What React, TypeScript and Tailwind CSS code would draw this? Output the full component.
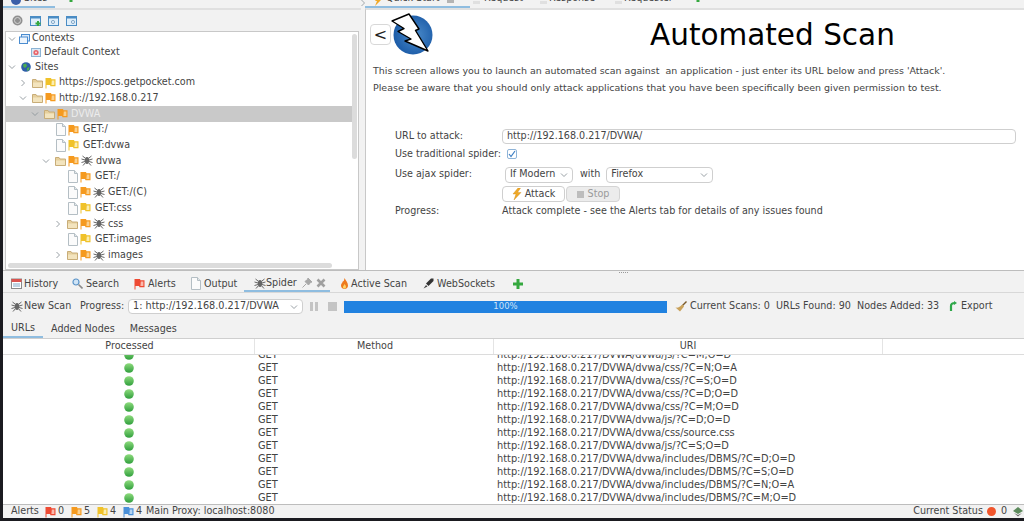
import React from "react";

type FlagColor = "red" | "orange" | "yellow" | "blue";
const flagColors: Record<FlagColor, [string, string]> = {
  red: ["#ee4a33", "#fbb9ad"],
  orange: ["#f59a1f", "#fbd08c"],
  yellow: ["#f0c22a", "#fbeeb0"],
  blue: ["#4a90d9", "#b5d4f2"],
};

function Flag({ c = "orange" }: { c?: FlagColor }) {
  const [a, b] = flagColors[c];
  return (
    <svg width="11" height="12" viewBox="0 0 11 12" className="shrink-0">
      <path d="M0.5 1h5.5l0.5 1.2h4v7H5.5L5 8H1.5v3.5h-1z" fill={a} />
      <path d="M6.8 3.4h2.6v4.6H6.4z" fill={b} />
      <path d="M2 2.2h2.6v4.6H2z" fill={a} />
    </svg>
  );
}

function Spider({ c = "#666" }: { c?: string }) {
  return (
    <svg width="12" height="11" viewBox="0 0 12 11" className="shrink-0" stroke={c} strokeWidth="1" fill="none">
      <ellipse cx="6" cy="5.5" rx="2.2" ry="3.4" fill={c} stroke="none" />
      <path d="M4 3 L1.5 1 M4 5 L0.5 4 M4 6.5 L0.5 7.5 M4.2 8 L2 10.5 M8 3 L10.5 1 M8 5 L11.5 4 M8 6.5 L11.5 7.5 M7.8 8 L10 10.5" />
    </svg>
  );
}

function FileIcon() {
  return (
    <svg width="10" height="13" viewBox="0 0 10 13" className="shrink-0">
      <path d="M0.5 0.5h6l3 3v9h-9z" fill="#fbfbfb" stroke="#b4bec4" />
      <path d="M6.5 0.5v3h3" fill="#e2e8ea" stroke="#b4bec4" />
    </svg>
  );
}

function Folder() {
  return (
    <svg width="11" height="10" viewBox="0 0 11 10" className="shrink-0">
      <path d="M0.5 1.5h3.5l1 1.5h5.5v6.5h-10z" fill="#e6cf9c" stroke="#c8ad78" />
      <path d="M1 4.5h9v4.5H1z" fill="#f3e4be" />
    </svg>
  );
}

function Chevron({ open }: { open?: boolean }) {
  return (
    <svg width="8" height="8" viewBox="0 0 8 8" className="shrink-0" fill="none" stroke="#8d959b" strokeWidth="0.9">
      {open ? <path d="M1 2.5 L4 5.5 L7 2.5" /> : <path d="M2.5 1 L5.5 4 L2.5 7" />}
    </svg>
  );
}

function TreeRow({ pad, children, selected, h = "h-[15.7px]" }: { pad: string; children: React.ReactNode; selected?: boolean; h?: string }) {
  return (
    <div className={`flex ${h} items-center gap-[2px] ${pad} ${selected ? "mr-[6px] bg-[#c9c9c9] text-[#ececec]" : ""}`}>
      {children}
    </div>
  );
}

function SmallWin({ children }: { children?: React.ReactNode }) {
  return (
    <svg width="11" height="10" viewBox="0 0 11 10">
      <rect x="0.5" y="0.5" width="10" height="9" fill="#dfeefa" stroke="#4a8cc4" />
      <rect x="0.5" y="0.5" width="10" height="2" fill="#4a8cc4" />
      {children}
    </svg>
  );
}

const rows = [
  "js/?C=M;O=D",
  "css/?C=N;O=A",
  "css/?C=S;O=D",
  "css/?C=D;O=D",
  "css/?C=M;O=D",
  "js/?C=D;O=D",
  "css/source.css",
  "js/?C=S;O=D",
  "includes/DBMS/?C=D;O=D",
  "includes/DBMS/?C=S;O=D",
  "includes/DBMS/?C=N;O=A",
  "includes/DBMS/?C=M;O=D",
];

function Dot() {
  return (
    <svg width="10" height="10" viewBox="0 0 10 10">
      <defs>
        <linearGradient id="g" x1="0" y1="0" x2="0" y2="1">
          <stop offset="0" stopColor="#8fdc7e" />
          <stop offset="1" stopColor="#2f9e3c" />
        </linearGradient>
      </defs>
      <circle cx="5" cy="5" r="4.8" fill="url(#g)" />
    </svg>
  );
}

function Logo() {
  return (
    <svg width="44" height="44" viewBox="0 0 44 44" className="shrink-0">
      <defs>
        <radialGradient id="lg" cx="0.55" cy="0.5" r="0.6">
          <stop offset="0" stopColor="#4c8ccb" />
          <stop offset="1" stopColor="#1757a4" />
        </radialGradient>
      </defs>
      <circle cx="22" cy="23" r="19.5" fill="url(#lg)" />
      <path
        d="M1 9 L18 2 L28 17 L24.5 18.5 L37 39 L14 29 L20 27 L7 19.5 L13 16.5 Z"
        fill="#fff"
        stroke="#000"
        strokeWidth="1.4"
        strokeLinejoin="round"
      />
    </svg>
  );
}

function Plus() {
  return (
    <svg width="10" height="10" viewBox="0 0 10 10" className="shrink-0">
      <path d="M3.5 0h3v3.5H10v3H6.5V10h-3V6.5H0v-3h3.5z" fill="#35a83f" />
    </svg>
  );
}

export default function App() {
  return (
    <div
      className="flex h-[521px] w-[1024px] flex-col overflow-hidden bg-[#1b1b20] pb-[3px] pl-[3px] text-[9.6px] text-[#444]"
      style={{ fontFamily: '"DejaVu Sans", sans-serif' }}
    >
      <div className="flex min-h-0 flex-1 flex-col bg-[#f2f2f2]">
        {/* upper panes */}
        <div className="flex h-[270px] shrink-0">
          {/* left pane */}
          <div className="flex w-[358px] shrink-0 flex-col">
            <div className="flex h-[8px] shrink-0 items-end overflow-hidden">
              <div className="flex h-[8px] w-[52px] items-end gap-[3px] border-b-2 border-[#8fbde0] pl-[8px]">
                <span className="mb-[1px] h-[10px] w-[10px] shrink-0 rounded-full bg-[#3b5fa8]" />
                <span className="leading-[16px]">Sites</span>
              </div>
              <div className="mb-[6px] ml-[11px]">
                <Plus />
              </div>
            </div>
            <div className="flex h-[23px] shrink-0 items-center gap-[7px] border-t-2 border-[#e0e0e0] pl-[9px]">
              <svg width="11" height="11" viewBox="0 0 11 11">
                <circle cx="5.5" cy="5.5" r="5" fill="#8f8f8f" />
                <circle cx="5.5" cy="5.5" r="3" fill="none" stroke="#d4d4d4" />
              </svg>
              <SmallWin>
                <path d="M5.5 7.5h5M8 5v5" stroke="#35a83f" strokeWidth="2" />
              </SmallWin>
              <SmallWin>
                <circle cx="5" cy="6" r="1.6" fill="none" stroke="#88aac8" />
              </SmallWin>
              <SmallWin>
                <circle cx="7" cy="6" r="1.6" fill="none" stroke="#88aac8" />
              </SmallWin>
            </div>
            <div className="relative mx-[2px] min-h-0 flex-1 overflow-hidden border border-[#c8c8c8] bg-white">
              <TreeRow pad="pl-[2px]" h="h-[13px]">
                <Chevron open />
                <svg width="11" height="10" viewBox="0 0 11 10" className="ml-[1px]">
                  <rect x="2.5" y="0.5" width="8" height="6.5" fill="#dceafa" stroke="#4a8cd0" />
                  <rect x="0.5" y="3" width="8" height="6.5" fill="#eef5fc" stroke="#4a8cd0" />
                </svg>
                <span>Contexts</span>
              </TreeRow>
              <TreeRow pad="pl-[25px]" h="h-[14px]">
                <svg width="10" height="9" viewBox="0 0 10 9">
                  <rect x="0.5" y="0.5" width="9" height="8" fill="#dbe9f5" stroke="#8db4d4" />
                  <circle cx="5" cy="4.5" r="2.6" fill="#e8636a" />
                  <circle cx="5" cy="4.5" r="1" fill="#fbdada" />
                </svg>
                <span className="ml-[1px]">Default Context</span>
              </TreeRow>
              <TreeRow pad="pl-[2px]">
                <Chevron open />
                <svg width="10" height="10" viewBox="0 0 10 10" className="ml-[3px]">
                  <circle cx="5" cy="5" r="4.8" fill="#2f5fa8" />
                  <path d="M2 2.5 L5 1.5 L6 4 L4 6 L2.5 5z M6 6 L8.5 5 L8 8 L6 9z" fill="#4caf50" />
                </svg>
                <span className="ml-[2px]">Sites</span>
              </TreeRow>
              <TreeRow pad="pl-[13px]">
                <Chevron />
                <span className="ml-[3px]">
                  <Folder />
                </span>
                <Flag c="yellow" />
                <span className="ml-[1px]">https://spocs.getpocket.com</span>
              </TreeRow>
              <TreeRow pad="pl-[13px]">
                <Chevron open />
                <span className="ml-[3px]">
                  <Folder />
                </span>
                <Flag />
                <span className="ml-[1px]">http://192.168.0.217</span>
              </TreeRow>
              <TreeRow pad="pl-[25px]" selected>
                <Chevron open />
                <span className="ml-[3px]">
                  <Folder />
                </span>
                <Flag />
                <span className="ml-[1px]">DVWA</span>
              </TreeRow>
              <TreeRow pad="pl-[50px]">
                <FileIcon />
                <Flag />
                <span className="ml-[2px]">GET:/</span>
              </TreeRow>
              <TreeRow pad="pl-[50px]">
                <FileIcon />
                <Flag c="yellow" />
                <span className="ml-[2px]">GET:dvwa</span>
              </TreeRow>
              <TreeRow pad="pl-[36px]">
                <Chevron open />
                <span className="ml-[3px]">
                  <Folder />
                </span>
                <Flag />
                <Spider />
                <span className="ml-[1px]">dvwa</span>
              </TreeRow>
              <TreeRow pad="pl-[62px]">
                <FileIcon />
                <Flag />
                <span className="ml-[2px]">GET:/</span>
              </TreeRow>
              <TreeRow pad="pl-[62px]">
                <FileIcon />
                <Flag />
                <Spider />
                <span className="ml-[1px]">GET:/(C)</span>
              </TreeRow>
              <TreeRow pad="pl-[62px]">
                <FileIcon />
                <Flag c="yellow" />
                <span className="ml-[2px]">GET:css</span>
              </TreeRow>
              <TreeRow pad="pl-[48px]">
                <Chevron />
                <span className="ml-[3px]">
                  <Folder />
                </span>
                <Flag />
                <Spider />
                <span className="ml-[1px]">css</span>
              </TreeRow>
              <TreeRow pad="pl-[62px]">
                <FileIcon />
                <Flag c="yellow" />
                <span className="ml-[2px]">GET:images</span>
              </TreeRow>
              <TreeRow pad="pl-[48px]">
                <Chevron />
                <span className="ml-[3px]">
                  <Folder />
                </span>
                <Flag />
                <Spider />
                <span className="ml-[1px]">images</span>
              </TreeRow>
              {/* scrollbars overlay the tree */}
              <div className="absolute right-[1px] top-[2px] h-[125px] w-[5px] rounded-sm bg-[#dcdcdc]" />
              <div className="absolute bottom-[1px] left-[2px] h-[5px] w-[324px] rounded-sm bg-[#dcdcdc]" />
            </div>
          </div>

          {/* gutter */}
          <div className="w-[4px] shrink-0">
            <svg width="4" height="8" viewBox="0 0 4 8" fill="none" stroke="#8d959b" strokeWidth="0.8">
              <path d="M0.5 0 L3.5 3 L0.5 6" />
            </svg>
          </div>

          {/* right pane */}
          <div className="flex min-w-0 flex-1 flex-col">
            <div className="flex h-[8px] shrink-0 items-end overflow-hidden">
              <div className="flex h-[8px] w-[105px] shrink-0 items-end border-b-2 border-[#8fbde0] pl-[9px]">
                <svg width="8" height="10" viewBox="0 0 8 10" className="mr-[4px] shrink-0">
                  <path d="M5 0 L1 5 L3 5 L1 10 L7 4 L4 4 L6 0z" fill="#f0a825" />
                </svg>
                <span className="leading-[16px]">Quick Start</span>
                <span className="mb-[3px] ml-[7px] h-[4px] w-[7px] bg-[#b4b4b4]" />
              </div>
              <span className="mb-[4px] ml-[3px] h-[3px] w-[7px] bg-[#e0e0e0]" />
              <span className="mb-[2px] w-[60px] shrink-0 pl-[4px] leading-[16px]">Request</span>
              <span className="mb-[4px] h-[3px] w-[7px] bg-[#e0e0e0]" />
              <span className="mb-[2px] w-[68px] shrink-0 pl-[2px] leading-[16px]">Response</span>
              <span className="mb-[4px] h-[3px] w-[7px] bg-[#e0e0e0]" />
              <span className="mb-[2px] w-[71px] shrink-0 pl-[2px] leading-[16px]">Requester</span>
              <div className="mb-[6px]">
                <Plus />
              </div>
            </div>
            <div className="min-h-0 flex-1 overflow-hidden border-l border-t-2 border-l-[#c8c8c8] border-t-[#e0e0e0] bg-white">
              <div className="flex h-[47px] items-start pl-[4px] pt-[4px]">
                <div className="mt-[10px] flex h-[21px] w-[21px] items-center justify-center rounded-sm border border-[#d8d8d8] bg-white text-[16px] leading-none text-[#222]">
                  &lt;
                </div>
                <div className="-mt-[2px]">
                  <Logo />
                </div>
                <div className="ml-[215px] whitespace-nowrap pt-[1px] text-[29.5px] leading-[40px] text-black">Automated Scan</div>
              </div>
              <div className="whitespace-pre pl-[7px] pt-[5px] text-[9.47px] leading-[17px]">
                <div>This screen allows you to launch an automated scan against  an application - just enter its URL below and press 'Attack'.</div>
                <div>Please be aware that you should only attack applications that you have been specifically been given permission to test.</div>
              </div>
              <div className="flex flex-col pl-[29px] pt-[31px]">
                <div className="flex h-[18px] items-center">
                  <span className="w-[107px] shrink-0">URL to attack:</span>
                  <div className="flex h-[15px] w-[514px] items-center rounded-sm border border-[#cfcfcf] bg-white pl-[4px]">
                    http://192.168.0.217/DVWA/
                  </div>
                </div>
                <div className="flex h-[18px] items-center">
                  <span className="w-[112px] shrink-0">Use traditional spider:</span>
                  <span className="flex h-[10px] w-[10px] items-center justify-center rounded-[2px] border border-[#8fb4d8] bg-white">
                    <svg width="8" height="8" viewBox="0 0 8 8" fill="none" stroke="#3d7fc4" strokeWidth="1.2">
                      <path d="M1 4 L3 6.5 L7 1" />
                    </svg>
                  </span>
                </div>
                <div className="mt-[1px] flex h-[21px] items-center">
                  <span className="w-[110px] shrink-0">Use ajax spider:</span>
                  <div className="flex h-[16px] w-[68px] items-center justify-between rounded-sm border border-[#cfcfcf] bg-white px-[4px]">
                    <span>If Modern</span>
                    <Chevron open />
                  </div>
                  <span className="ml-[7px]">with</span>
                  <div className="ml-[6px] flex h-[16px] w-[107px] items-center justify-between rounded-sm border border-[#cfcfcf] bg-white px-[4px]">
                    <span>Firefox</span>
                    <Chevron open />
                  </div>
                </div>
                <div className="mt-[1px] flex h-[16px] items-center pl-[107px]">
                  <div className="flex h-[16px] w-[63px] items-center justify-center gap-[3px] rounded-sm border border-[#cfcfcf] bg-white">
                    <svg width="10" height="12" viewBox="0 0 10 12">
                      <path d="M6 0 L1 6 L4 6 L2 12 L9 4.5 L5.5 4.5 L8.5 0z" fill="#f0a825" stroke="#c98a1a" strokeWidth="0.4" />
                    </svg>
                    <span>Attack</span>
                  </div>
                  <div className="ml-[1px] flex h-[16px] w-[54px] items-center justify-center gap-[4px] rounded-sm border border-[#d4d4d4] bg-[#ececec] text-[#9a9a9a]">
                    <span className="h-[7px] w-[7px] bg-[#bdbdbd]" />
                    <span>Stop</span>
                  </div>
                </div>
                <div className="flex h-[18px] items-center">
                  <span className="w-[107px] shrink-0">Progress:</span>
                  <span>Attack complete - see the Alerts tab for details of any issues found</span>
                </div>
              </div>
            </div>
          </div>
        </div>

        {/* bottom workbench */}
        <div className="flex h-[5px] shrink-0 items-start border-t border-[#bdbdbd] pl-[616px]">
          <span className="mt-[1px] h-[1px] w-[9px] border-t border-dotted border-[#999]" />
        </div>

        <div className="flex h-[18px] shrink-0 items-center border-b border-[#d8d8d8] pl-[8px] pt-[1px]">
          <span className="flex w-[61px] shrink-0 items-center gap-[2px]">
            <svg width="11" height="11" viewBox="0 0 11 11">
              <rect x="0.5" y="1" width="10" height="9.5" fill="#fff" stroke="#8a8a8a" />
              <rect x="0.5" y="1" width="10" height="3" fill="#d9534f" />
              <path d="M2 6h7M2 8h7" stroke="#7fa8c8" />
            </svg>
            History
          </span>
          <span className="flex w-[62px] shrink-0 items-center gap-[3px]">
            <svg width="11" height="11" viewBox="0 0 11 11" fill="none">
              <circle cx="4" cy="4" r="3" fill="#cfe4f6" stroke="#5a93c8" strokeWidth="1.2" />
              <path d="M6.5 6.5 L10.5 10.5" stroke="#8a8a8a" strokeWidth="1.6" />
            </svg>
            Search
          </span>
          <span className="flex w-[57px] shrink-0 items-center gap-[3px]">
            <Flag c="red" />
            Alerts
          </span>
          <span className="flex w-[53px] shrink-0 items-center gap-[3px]">
            <FileIcon />
            Output
          </span>
          <span className="flex w-[86px] shrink-0 items-center self-stretch border-b-2 border-[#8fbde0] pl-[10px]">
            <Spider />
            <span>Spider</span>
            <svg width="10" height="10" viewBox="0 0 10 10" className="ml-[5px]">
              <path d="M6 0 L10 4 L8.5 4.5 L6.5 7 L3 3.5 L5.5 1.5z M4 6 L0.5 9.5" fill="#a8a8a8" stroke="#a8a8a8" />
            </svg>
            <svg width="10" height="10" viewBox="0 0 10 10" className="ml-[4px]">
              <path d="M1.5 1.5 L8.5 8.5 M8.5 1.5 L1.5 8.5" stroke="#a0a0a0" strokeWidth="2.6" />
            </svg>
          </span>
          <span className="ml-[11px] flex w-[82px] shrink-0 items-center gap-[3px]">
            <svg width="7" height="11" viewBox="0 0 7 11">
              <path d="M3.5 0 C5 3 7 4.5 7 7.5 C7 9.5 5.5 11 3.5 11 C1.5 11 0 9.5 0 7.5 C0 5.5 1.5 5 2 3 C2.5 3.5 3 3.5 3.5 0z" fill="#ee7a1e" />
              <path d="M3.5 6 C4.5 7 5 8 5 9 C5 10 4 10.5 3.5 10.5 C2.5 10.5 2 10 2 9 C2 8 3 7.5 3.5 6z" fill="#fbd56a" />
            </svg>
            Active Scan
          </span>
          <span className="flex w-[90px] shrink-0 items-center gap-[3px]">
            <svg width="11" height="11" viewBox="0 0 11 11">
              <path d="M0.5 10.5 L3 7 L4.5 8.5z" fill="#444" />
              <path d="M3 5.5 L8 0.5 L10.5 0.5 L10.5 3 L5.5 8z" fill="#333" />
            </svg>
            WebSockets
          </span>
          <Plus />
        </div>

        <div className="flex h-[27px] shrink-0 items-center pl-[8px]">
          <span className="flex w-[69px] shrink-0 items-center gap-[1px]">
            <Spider />
            New Scan
          </span>
          <span className="w-[48px] shrink-0">Progress:</span>
          <div className="flex h-[15px] w-[175px] shrink-0 items-center justify-between rounded-sm border border-[#cfcfcf] bg-white px-[4px]">
            <span className="text-[9.7px]">1: http://192.168.0.217/DVWA</span>
            <Chevron open />
          </div>
          <span className="ml-[7px] flex gap-[2px]">
            <span className="h-[9px] w-[3px] bg-[#c4c4c4]" />
            <span className="h-[9px] w-[3px] bg-[#c4c4c4]" />
          </span>
          <span className="ml-[10px] h-[9px] w-[9px] bg-[#c4c4c4]" />
          <div className="ml-[7px] flex h-[12px] w-[323px] shrink-0 items-center justify-center bg-[#2182e0] text-[8.5px] text-[#cfe3f7]">
            100%
          </div>
          <svg width="12" height="11" viewBox="0 0 12 11" className="ml-[8px] shrink-0">
            <path d="M11.5 0.5 L7 5" stroke="#7a5a2a" strokeWidth="1.4" />
            <path d="M7.5 3.5 L9 5.5 L5 10.5 L0.5 6.5 C3 7 5 6 7.5 3.5z" fill="#c9a15a" />
          </svg>
          <span className="ml-[3px] w-[86px] shrink-0">Current Scans: 0</span>
          <span className="w-[81px] shrink-0">URLs Found: 90</span>
          <span className="w-[92px] shrink-0">Nodes Added: 33</span>
          <span className="flex items-center gap-[2px]">
            <svg width="8" height="11" viewBox="0 0 8 11" fill="none">
              <path d="M2 10 V5 C2 3 3.5 2 6 2" stroke="#2fa84a" strokeWidth="2.2" />
              <path d="M5 0 L8 2 L5 4z" fill="#2fa84a" />
            </svg>
            <span className="ml-[2px]">Export</span>
          </span>
        </div>

        <div className="flex h-[19px] shrink-0 items-stretch border-b border-[#cfcfcf]">
          <span className="flex w-[40px] items-center justify-center border-b-2 border-[#8fbde0]">URLs</span>
          <span className="ml-[8px] flex items-center">Added Nodes</span>
          <span className="ml-[15px] flex items-center">Messages</span>
        </div>

        <div className="flex h-[16px] shrink-0 border-b border-[#dcdcdc] bg-white">
          <span className="flex w-[252px] shrink-0 items-center justify-center border-r border-[#e4e4e4] pl-[2px]">Processed</span>
          <span className="flex w-[239px] shrink-0 items-center justify-center border-r border-[#e4e4e4] pl-[2px]">Method</span>
          <span className="flex w-[389px] shrink-0 items-center justify-center border-r border-[#e4e4e4]">URI</span>
          <span className="flex-1" />
        </div>

        <div className="min-h-0 flex-1 overflow-hidden bg-white text-[9.8px]">
          <div className="-mt-[7px]">
            {rows.map((r) => (
              <div key={r} className="flex h-[13px] items-center leading-[13px]">
                <span className="flex w-[252px] shrink-0 items-center justify-center">
                  <Dot />
                </span>
                <span className="w-[239px] shrink-0 pl-[3px]">GET</span>
                <span className="pl-[3px]">http://192.168.0.217/DVWA/dvwa/{r}</span>
              </div>
            ))}
          </div>
        </div>

        <div className="flex h-[14px] shrink-0 items-center border-t border-[#bdbdbd] pl-[8px]">
          <span className="w-[34px]">Alerts</span>
          <span className="flex w-[22px] items-center gap-[2px]">
            <Flag c="red" />0
          </span>
          <span className="ml-[4px] flex w-[22px] items-center gap-[2px]">
            <Flag c="orange" />5
          </span>
          <span className="ml-[4px] flex w-[22px] items-center gap-[2px]">
            <Flag c="yellow" />4
          </span>
          <span className="ml-[4px] flex w-[22px] items-center gap-[2px]">
            <Flag c="blue" />4
          </span>
          <span className="ml-[1px]">Main Proxy: localhost:8080</span>
          <span className="ml-auto">Current Status</span>
          <span className="ml-[4px] h-[9px] w-[9px] rounded-full bg-[#f0552c]" />
          <span className="ml-[5px]">0</span>
          <svg width="12" height="10" viewBox="0 0 10 10" className="ml-[5px] shrink-0">
            <path d="M5 0 L10 4 L5 7 L0 4z" fill="#5c8a5c" />
            <path d="M1 6 L5 9.5 L9 6 L5 8z" fill="#666" />
          </svg>
        </div>
      </div>
    </div>
  );
}
